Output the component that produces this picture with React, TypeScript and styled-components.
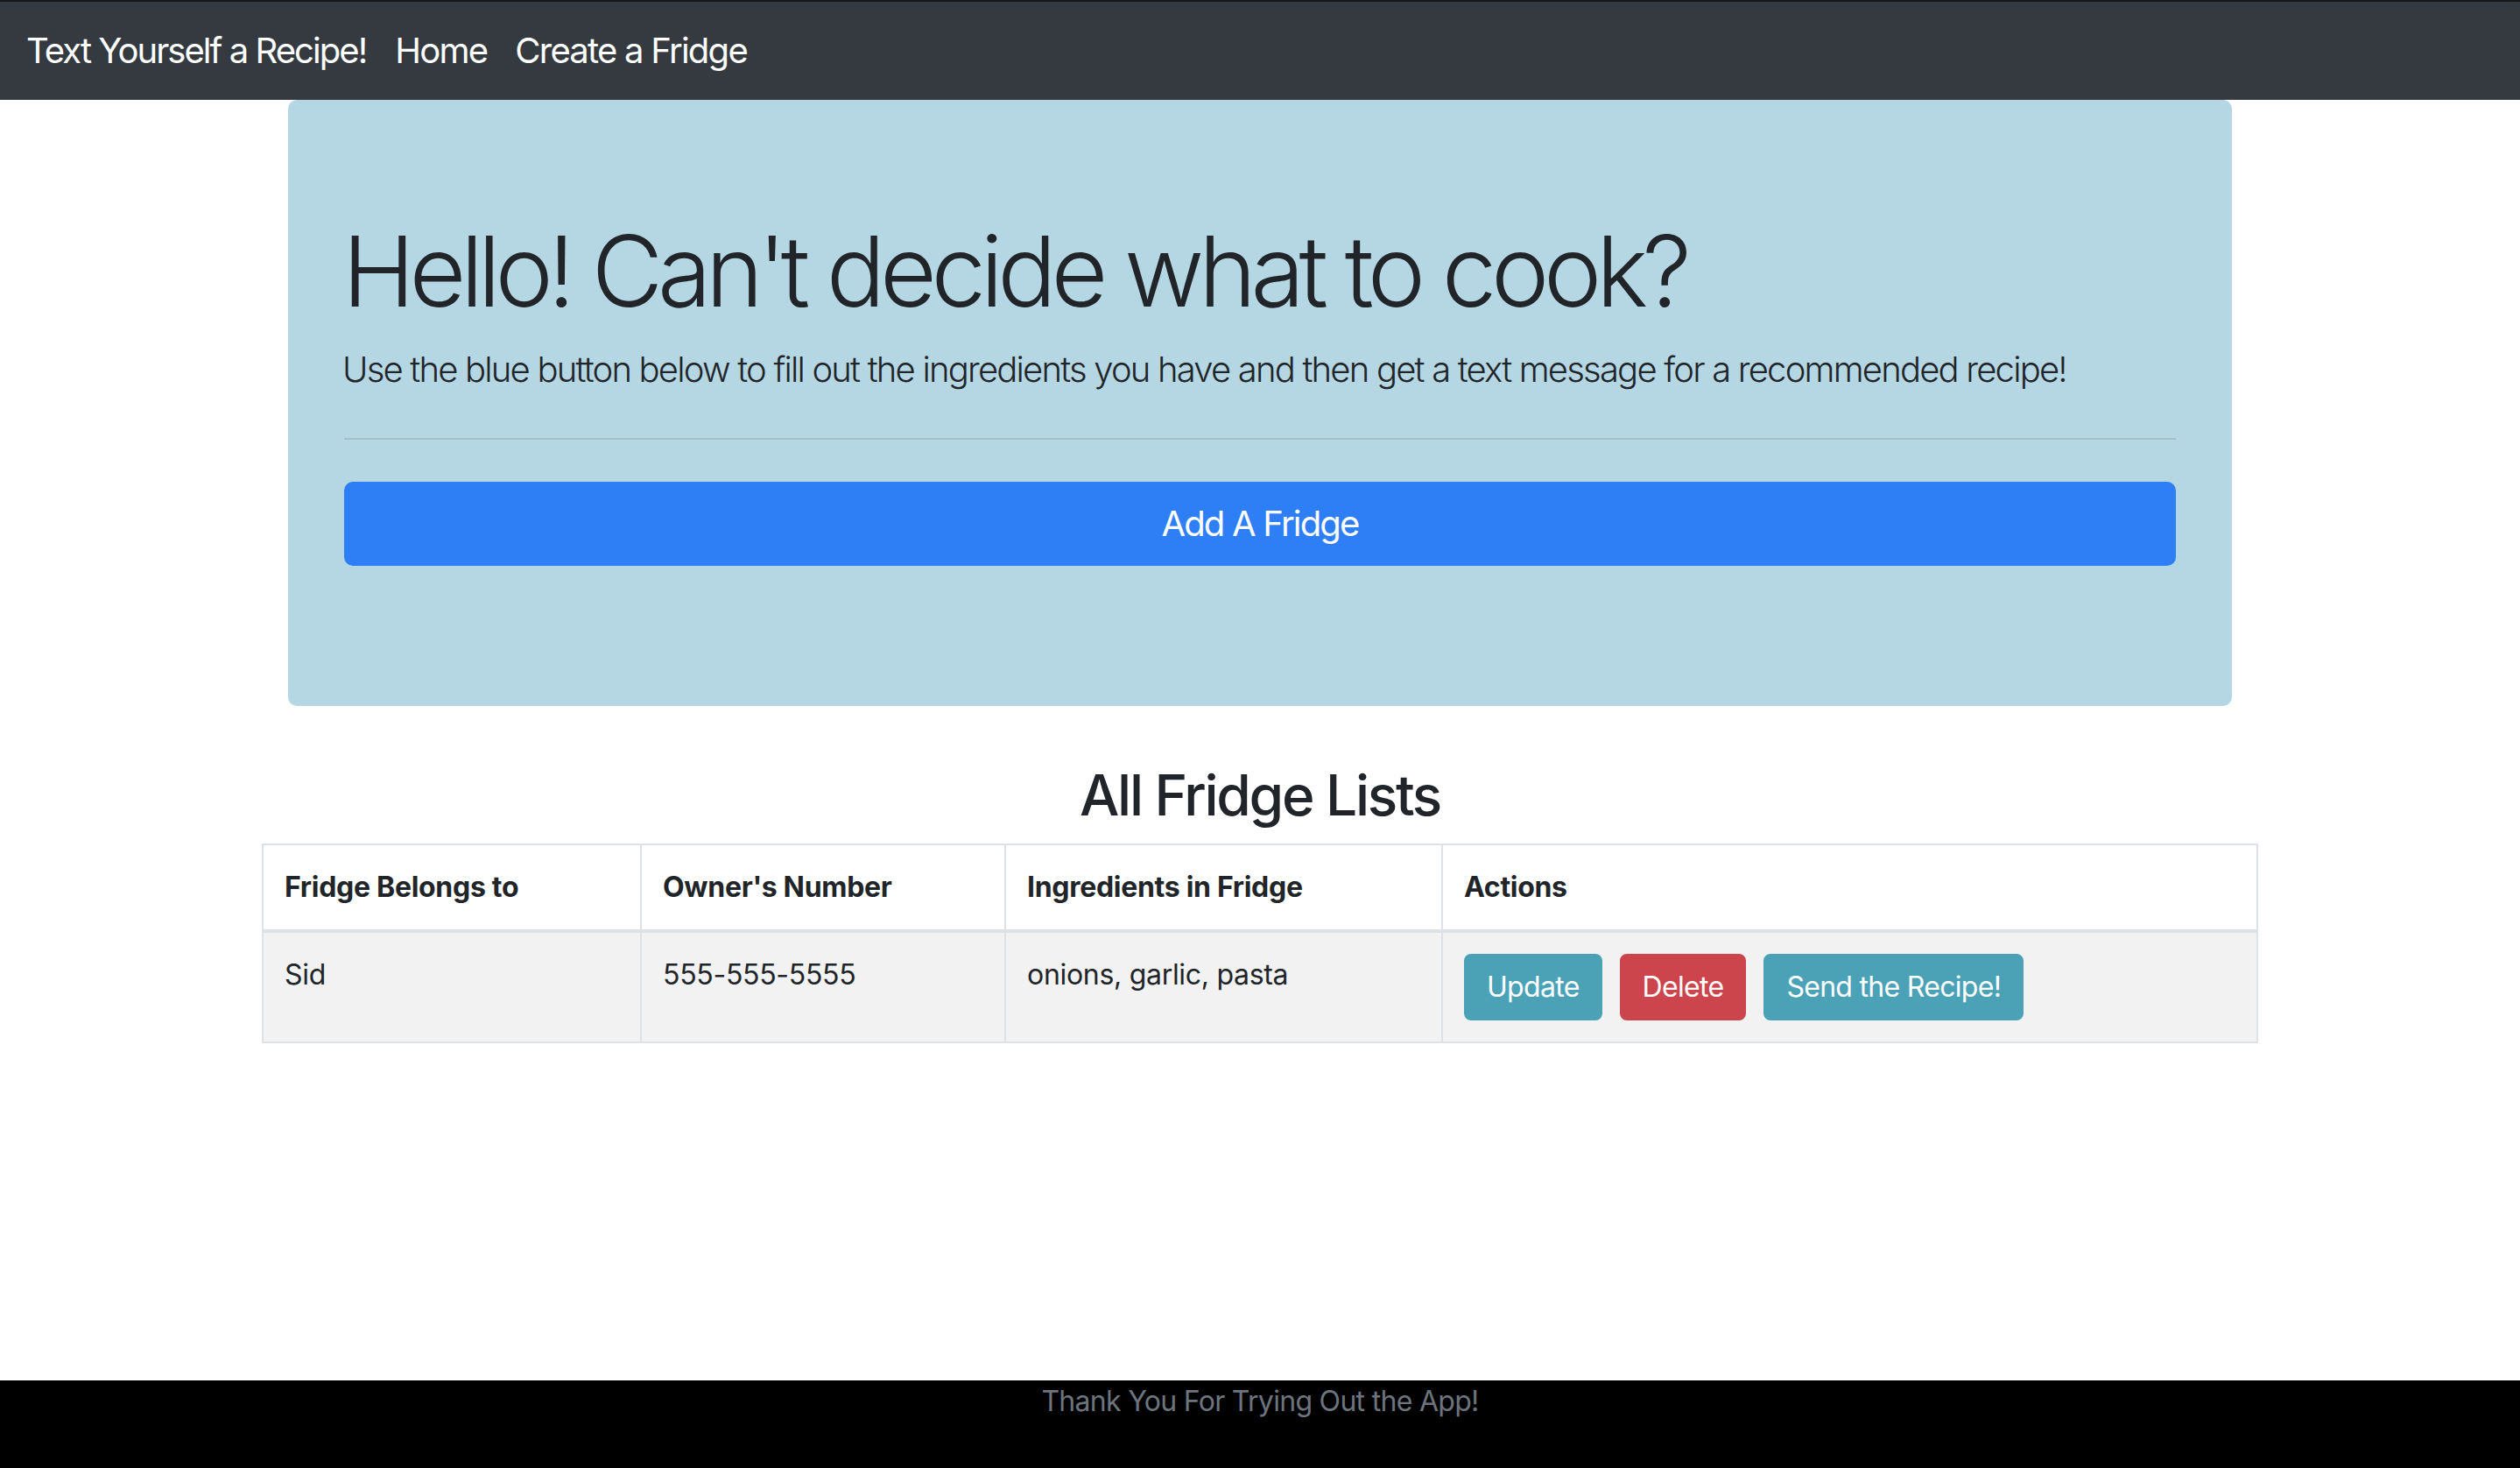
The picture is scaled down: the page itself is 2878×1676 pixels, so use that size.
import React from "react";
import styled, { createGlobalStyle } from "styled-components";

const GlobalStyle = createGlobalStyle`
  *, *::before, *::after { box-sizing: border-box; }
  html, body { margin: 0; padding: 0; }
  body {
    font-family: Inter, "Noto Sans", "Liberation Sans", sans-serif;
    color: #212529;
    background: #ffffff;
  }
`;

const Page = styled.div`
  display: flex;
  flex-direction: column;
  min-height: 100vh;
`;

const Navbar = styled.nav`
  display: flex;
  align-items: center;
  height: 114px;
  padding: 0 30px;
  background: #343a40;
  border-top: 2px solid #16181a;
`;

const Brand = styled.a`
  font-size: 40px;
  line-height: 1.5;
  color: #ffffff;
  text-decoration: none;
  margin-right: 33px;
  letter-spacing: -1.95px;
`;

const NavLinks = styled.div`
  display: flex;
  align-items: center;
  gap: 32px;
`;

const NavLink = styled.a`
  font-size: 40px;
  line-height: 1.5;
  color: #ffffff;
  text-decoration: none;
  letter-spacing: -1.75px;
`;

const Main = styled.main`
  flex: 1;
`;

const Container = styled.div`
  max-width: 2280px;
  margin: 0 auto;
  padding: 0 30px;
`;

const Jumbotron = styled.section`
  background: #b5d7e3;
  padding: 128px 64px;
  border-radius: 10px;
  margin-bottom: 64px;
`;

const Display = styled.h1`
  margin: 0 0 16px -2px;
  font-size: 112px;
  font-weight: 300;
  line-height: 1.2;
  letter-spacing: -6.4px;
`;

const Lead = styled.p`
  margin: 0 0 32px -2px;
  font-size: 40px;
  font-weight: 300;
  line-height: 1.5;
  letter-spacing: -1.8px;
  white-space: nowrap;
`;

const Divider = styled.hr`
  margin: 48px 0;
  border: 0;
  border-top: 2px solid rgba(0, 0, 0, 0.1);
`;

const ButtonWrap = styled.div`
  margin-bottom: 32px;
`;

const PrimaryButton = styled.button`
  display: block;
  width: 100%;
  padding: 16px 32px;
  font-family: inherit;
  font-size: 40px;
  font-weight: 400;
  line-height: 1.5;
  color: #ffffff;
  background: #2e7ef6;
  border: 2px solid #2e7ef6;
  border-radius: 10px;
  letter-spacing: -1.8px;
  cursor: pointer;
`;

const SectionTitle = styled.h2`
  margin: 0 0 16px;
  text-align: center;
  font-size: 64px;
  font-weight: 500;
  line-height: 1.2;
  letter-spacing: -2.3px;
`;

const TableWrap = styled.div`
  max-width: 2280px;
  margin: 0 auto;
`;

const Table = styled.table`
  width: 100%;
  border-collapse: collapse;
  border: 2px solid #dee2e6;
  font-size: 32px;
  line-height: 1.5;
`;

const Col = styled.col<{ $w: number }>`
  width: ${(p) => p.$w}px;
`;

const Th = styled.th`
  padding: 24px;
  text-align: left;
  font-weight: 700;
  vertical-align: bottom;
  border: 2px solid #dee2e6;
  border-bottom: 4px solid #dee2e6;
  letter-spacing: -0.3px;
`;

const BodyRow = styled.tr<{ $striped?: boolean }>`
  background: ${(p) => (p.$striped ? "#f2f2f2" : "#ffffff")};
`;

const Td = styled.td`
  padding: 24px;
  vertical-align: top;
  border: 2px solid #dee2e6;
  letter-spacing: -0.3px;
`;

const Actions = styled.div`
  display: flex;
  gap: 20px;
`;

const ActionButton = styled.button<{ $variant: "info" | "danger" }>`
  padding: 12px 24px;
  font-family: inherit;
  font-size: 32px;
  line-height: 1.5;
  color: #ffffff;
  background: ${(p) => (p.$variant === "danger" ? "#cc454c" : "#4ba2b7")};
  border: 2px solid ${(p) => (p.$variant === "danger" ? "#cc454c" : "#4ba2b7")};
  border-radius: 8px;
  letter-spacing: -0.7px;
  cursor: pointer;
`;

const Footer = styled.footer`
  height: 100px;
  background: #000000;
  color: #6c757d;
  text-align: center;
  font-size: 32px;
  line-height: 1.5;
  letter-spacing: -0.7px;
`;

const fridges = [
  { owner: "Sid", number: "555-555-5555", ingredients: "onions, garlic, pasta" },
];

export default function App() {
  return (
    <>
      <GlobalStyle />
      <Page>
        <Navbar>
          <Brand href="#">Text Yourself a Recipe!</Brand>
          <NavLinks>
            <NavLink href="#">Home</NavLink>
            <NavLink href="#">Create a Fridge</NavLink>
          </NavLinks>
        </Navbar>
        <Main>
          <Container>
            <Jumbotron>
              <Display>Hello! Can't decide what to cook?</Display>
              <Lead>
                Use the blue button below to fill out the ingredients you have and then get a text
                message for a recommended recipe!
              </Lead>
              <Divider />
              <ButtonWrap>
                <PrimaryButton>Add A Fridge</PrimaryButton>
              </ButtonWrap>
            </Jumbotron>
            <SectionTitle>All Fridge Lists</SectionTitle>
          </Container>
          <TableWrap>
            <Table>
              <colgroup>
                <Col $w={432} />
                <Col $w={416} />
                <Col $w={499} />
                <Col $w={931} />
              </colgroup>
              <thead>
                <tr>
                  <Th>Fridge Belongs to</Th>
                  <Th>Owner's Number</Th>
                  <Th>Ingredients in Fridge</Th>
                  <Th>Actions</Th>
                </tr>
              </thead>
              <tbody>
                {fridges.map((f, i) => (
                  <BodyRow key={i} $striped={i % 2 === 0}>
                    <Td>{f.owner}</Td>
                    <Td>{f.number}</Td>
                    <Td>{f.ingredients}</Td>
                    <Td>
                      <Actions>
                        <ActionButton $variant="info">Update</ActionButton>
                        <ActionButton $variant="danger">Delete</ActionButton>
                        <ActionButton $variant="info">Send the Recipe!</ActionButton>
                      </Actions>
                    </Td>
                  </BodyRow>
                ))}
              </tbody>
            </Table>
          </TableWrap>
        </Main>
        <Footer>Thank You For Trying Out the App!</Footer>
      </Page>
    </>
  );
}
